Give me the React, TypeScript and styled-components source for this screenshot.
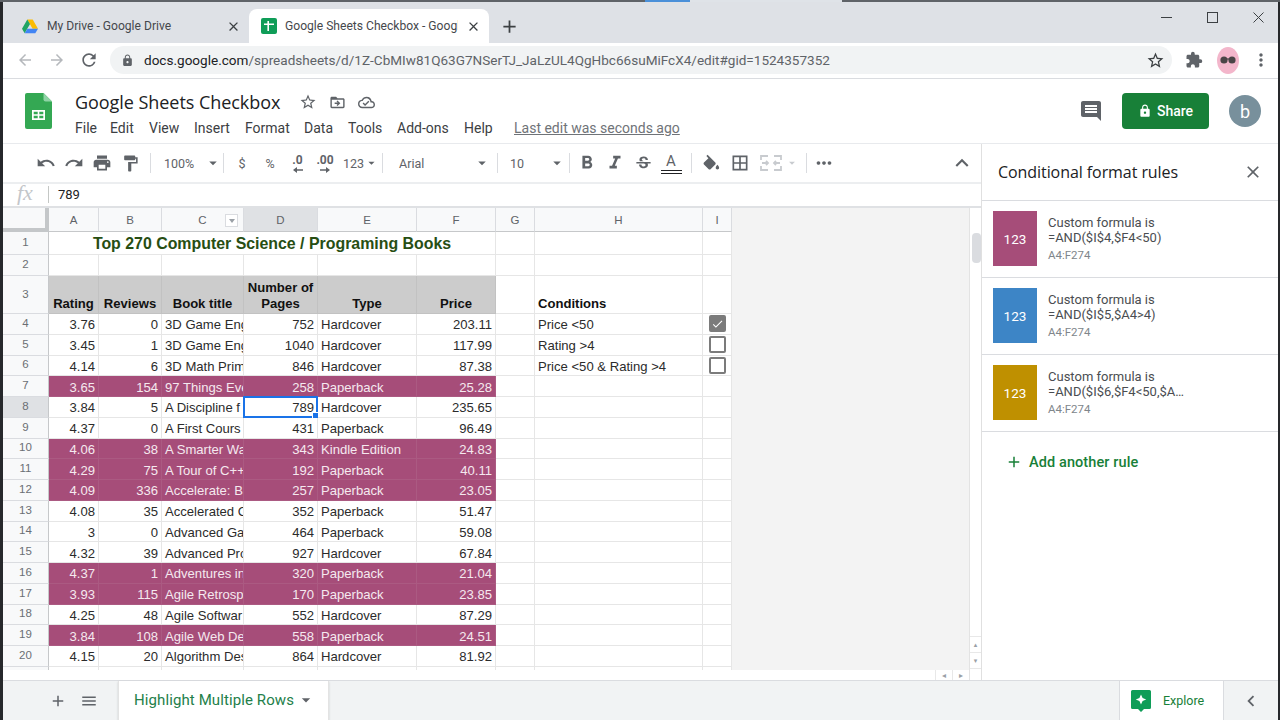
import React from "react";
import styled, { createGlobalStyle } from "styled-components";
import {
  MdUndo, MdRedo, MdPrint, MdFormatPaint, MdFormatBold, MdFormatItalic, MdStrikethroughS,
  MdBorderAll, MdMoreHoriz, MdExpandLess, MdArrowDropDown, MdClose,
  MdArrowBack, MdArrowForward, MdRefresh, MdLock, MdStarBorder, MdExtension, MdMoreVert,
  MdAdd, MdMenu, MdChevronLeft, MdDriveFileMoveOutline, MdOutlineCloudDone, MdInsertComment, MdCheck,
} from "react-icons/md";

const Global = createGlobalStyle`
  html, body { margin: 0; padding: 0; width: 1280px; height: 720px; overflow: hidden; background: #2b2d30; }
  #root { width: 1280px; height: 720px; }
  * { box-sizing: border-box; }
`;

const Frame = styled.div`
  width: 1280px; height: 720px; display: flex; flex-direction: column; overflow: hidden;
  padding-left: 3px; padding-right: 2px; background: #26282b;
  font-family: Roboto, "Liberation Sans", sans-serif; color: #202124; position: relative;
`;
const TopLine = styled.div`
  height: 2px; flex: none; margin-left: -3px; margin-right: -2px; display: flex; background: #5f6368;
`;
const TopSeg = styled.div<{ $w: number; $c: string }>`
  width: ${(p) => p.$w}px; background: ${(p) => p.$c};
`;
const TabStrip = styled.div`
  height: 41px; flex: none; background: #dee1e6; display: flex; align-items: flex-end; padding-left: 6px; position: relative;
`;
const Tab = styled.div<{ $active?: boolean }>`
  width: 240px; height: 34px; display: flex; align-items: center; padding: 0 8px 0 ${(p) => (p.$active ? 12 : 13)}px; gap: ${(p) => (p.$active ? 8 : 9)}px;
  color: #45484c; border-radius: 8px 8px 0 0;
  background: ${(p) => (p.$active ? "#ffffff" : "transparent")};
`;
const TabTitle = styled.span`
  flex: 1; white-space: nowrap; overflow: hidden; font-size: 12.1px;
`;
const TabPlus = styled.div`
  width: 24px; height: 34px; display: flex; align-items: center; justify-content: center; margin-left: 8px; color: #3c4043;
`;
const WinControls = styled.div`
  margin-left: auto; margin-right: -3px; align-self: flex-start; display: flex; height: 30px; align-items: center; color: #3c4043;
`;
const WinBtn = styled.div`
  width: 46px; height: 30px; display: flex; align-items: center; justify-content: center;
`;
const AddressRow = styled.div`
  height: 36px; flex: none; background: #fff; border-bottom: 1px solid #dadce0; display: flex; align-items: center; padding-left: 6px; color: #5f6368; padding-bottom: 1px;
`;
const NavBtn = styled.div<{ $w?: number; $muted?: boolean }>`
  width: ${(p) => p.$w ?? 32}px; flex: none; display: flex; align-items: center; justify-content: center;
  color: ${(p) => (p.$muted ? "#b5b8bc" : "#5f6368")};
`;
const Omnibox = styled.div`
  width: 1062px; height: 28px; margin-left: 5px; border-radius: 14px; background: #f1f3f4; display: flex; align-items: center; padding: 0 7px 0 11px; flex: none;
`;
const Url = styled.div`
  flex: 1; font-size: 13.55px; color: #5f6368; margin-left: 10px; white-space: nowrap;
`;
const UrlHost = styled.span`
  color: #202124;
`;
const Avatar = styled.div`
  width: 22px; height: 27px; border-radius: 50%; background: #f3b6cb; display: flex; align-items: center; justify-content: center; margin: 0 11px 0 1px; flex: none;
`;
const AppHeader = styled.div`
  height: 65px; flex: none; background: #fff; display: flex; border-bottom: 1px solid #e8eaed;
`;
const LogoWrap = styled.div`
  width: 72px; flex: none; padding: 14px 0 0 22px;
`;
const TitleCol = styled.div`
  flex: 1; display: flex; flex-direction: column; padding-top: 11px;
`;
const TitleRow = styled.div`
  display: flex; align-items: center; height: 24px; color: #5f6368;
`;
const DocTitle = styled.div`
  font-size: 18px; color: #202124; margin-right: 12px; width: 206px; white-space: nowrap; font-family: "Open Sans", Roboto, sans-serif; letter-spacing: -0.05px;
`;
const TitleIcon = styled.div`
  width: 29.5px; display: flex; justify-content: center; flex: none;
`;
const MenuRow = styled.div`
  display: flex; align-items: center; height: 24px; margin-top: 2px; font-size: 14px; color: #3c4043;
`;
const MenuItem = styled.span<{ $w: number }>`
  width: ${(p) => p.$w}px; flex: none; white-space: nowrap;
`;
const LastEdit = styled.span`
  color: #6f7378; text-decoration: underline; white-space: nowrap; font-size: 14px;
`;
const HeaderRight = styled.div`
  display: flex; align-items: center; height: 100%; margin-bottom: 13px; padding-right: 17px;
`;
const CommentBtn = styled.div`
  color: #5f6368; margin-right: 19px; display: flex;
`;
const ShareBtn = styled.div`
  width: 87px; height: 36px; background: #188038; color: #fff; border-radius: 4px; display: flex; align-items: center; justify-content: center; gap: 5px; font-size: 14px; font-weight: 500; margin-right: 20px;
`;
const UserBadge = styled.div`
  width: 32px; height: 32px; border-radius: 50%; background: #78909c; color: #fff; display: flex; align-items: center; justify-content: center; font-size: 18px;
`;
const Body = styled.div`
  height: 536px; flex: none; display: flex; background: #fff;
`;
const WorkArea = styled.div`
  width: 978px; flex: none; display: flex; flex-direction: column;
`;
const Toolbar = styled.div`
  height: 40px; flex: none; display: flex; align-items: center; padding-left: 29px; border-bottom: 2px solid #eceef0; color: #5f6368; background: #fff;
`;
const Tool = styled.div<{ $w?: number; $ml?: number; $muted?: boolean; $left?: boolean; $pl?: number; $pr?: number }>`
  width: ${(p) => p.$w ?? 28}px; margin-left: ${(p) => p.$ml ?? 0}px; flex: none; height: 26px; display: flex; align-items: center; font-size: 12.5px;
  padding-left: ${(p) => p.$pl ?? 0}px; padding-right: ${(p) => p.$pr ?? 0}px;
  justify-content: ${(p) => (p.$left ? "space-between" : "center")};
  color: ${(p) => (p.$muted ? "#c8cbcf" : "#5f6368")};
`;
const ToolSep = styled.div<{ $ml: number }>`
  width: 1px; height: 20px; background: #dadce0; flex: none; margin-left: ${(p) => p.$ml}px;
`;
const DecimalTool = styled.div`
  display: flex; flex-direction: column; align-items: center; gap: 1px; font-size: 12px; font-weight: 700; line-height: 12px; color: #5f6368;
`;
const ColorA = styled.div`
  display: flex; flex-direction: column; align-items: center; font-size: 15px; line-height: 16px; color: #5f6368; width: 22px;
`;
const ColorBar = styled.div`
  width: 21px; height: 4px; border-top: 1.5px solid #202124; border-bottom: 1.5px solid #202124; margin-top: 1px;
`;
const Formula = styled.div`
  height: 24px; flex: none; display: flex; align-items: center; background: #fff; border-bottom: 2px solid #dfe1e4; font-size: 13px; color: #202124; padding-bottom: 2px;
`;
const Fx = styled.div`
  width: 45px; flex: none; font-family: "Liberation Serif", serif; font-style: italic; font-size: 22px; color: #c3c6ca; padding-left: 14px; line-height: 20px; margin-top: -2px;
`;
const FxSep = styled.div`
  width: 1px; height: 17px; background: #c4c7c5; margin-right: 9px;
`;
const GridArea = styled.div`
  flex: 1; display: flex; background: #f3f3f3; min-height: 0;
`;
const SheetCol = styled.div`
  flex: 1; display: flex; flex-direction: column; min-width: 0;
`;
const SheetScroll = styled.div`
  height: 462px; flex: none; overflow: hidden;
`;
const Row = styled.div<{ $h: number }>`
  display: grid; width: 729px; height: ${(p) => p.$h}px;
  grid-template-columns: 46px 50px 63px 82px 74px 99px 79px 39px 168px 29px;
`;
const ColHeader = styled.div<{ $sel?: boolean; $corner?: boolean }>`
  background: ${(p) => (p.$sel ? "#dfe1e4" : "#f8f9fa")}; border-right: ${(p) => (p.$corner ? "4px solid #c4c7c9" : "1px solid #dadce0")};
  border-bottom: ${(p) => (p.$corner ? "4px solid #c4c7c9" : "1.5px solid #c6c8ca")};
  font-size: 11.5px; color: #5f6368; display: flex; align-items: center; justify-content: center; position: relative; font-family: "Liberation Sans", sans-serif;
`;
const FilterChip = styled.div`
  position: absolute; right: 5px; top: 6px; width: 13px; height: 13px; background: #fff; border: 1px solid #dadce0; display: flex; align-items: center; justify-content: center;
  &::after { content: ""; border: 3.5px solid transparent; border-top: 4px solid #9aa0a6; margin-top: 4px; }
`;
const RowNum = styled.div<{ $sel?: boolean }>`
  background: ${(p) => (p.$sel ? "#dfe1e4" : "#f8f9fa")}; border-right: 1.5px solid #c6c8ca; border-bottom: 1px solid #dadce0;
  font-size: 11.5px; color: #6b6f74; display: flex; align-items: center; justify-content: center; font-family: "Liberation Sans", sans-serif; padding-bottom: 2px;
`;
const Cell = styled.div<{ $hi?: boolean; $gray?: boolean; $bold?: boolean; $right?: boolean; $center?: boolean; $sel?: boolean; $wrap?: boolean }>`
  font-family: "Liberation Sans", Arial, sans-serif; font-size: 13.1px; padding: 0 3px; line-height: 15.5px;
  white-space: ${(p) => (p.$wrap ? "normal" : "nowrap")}; overflow: ${(p) => (p.$sel ? "visible" : "hidden")}; position: relative;
  display: flex; align-items: flex-end; padding-bottom: ${(p) => (p.$bold ? 2 : 1)}px;
  justify-content: ${(p) => (p.$center ? "center" : p.$right ? "flex-end" : "flex-start")};
  text-align: ${(p) => (p.$center ? "center" : "left")};
  font-weight: ${(p) => (p.$bold ? 700 : 400)};
  background: ${(p) => (p.$hi ? "#a64d79" : p.$gray ? "#cccccc" : "#ffffff")};
  color: ${(p) => (p.$hi ? "#f5e9ef" : p.$bold ? "#111" : "#2b2b2b")};
  border-right: 1px solid ${(p) => (p.$hi ? "#ab5a82" : p.$gray ? "#c2c2c2" : "#e6e6e6")};
  border-bottom: 1px solid ${(p) => (p.$hi ? "#ab5a82" : p.$gray ? "#c2c2c2" : "#e6e6e6")};
`;
const TitleCell = styled.div`
  grid-column: 2 / span 6; font-family: "Liberation Sans", Arial, sans-serif; font-size: 15.9px; font-weight: 700; color: #274e13;
  background: #fff; border-right: 1px solid #e6e6e6; border-bottom: 1px solid #e6e6e6; display: flex; align-items: center; justify-content: center; padding-top: 1px;
`;
const Selection = styled.div`
  position: absolute; left: -1px; top: -1px; right: -1px; bottom: -1px; border: 2px solid #1a73e8; pointer-events: none;
  &::after { content: ""; position: absolute; right: -4px; bottom: -4px; width: 6px; height: 6px; background: #1a73e8; border: 1px solid #fff; box-sizing: content-box; }
`;
const CheckCell = styled(Cell)`
  align-items: center; justify-content: center; padding: 0;
`;
const Check = styled.div<{ $on?: boolean }>`
  width: 17px; height: 17px; border-radius: 2px; border: 2px solid #7b7b7b; background: ${(p) => (p.$on ? "#7b7b7b" : "#fff")}; color: #fff; display: flex; align-items: center; justify-content: center;
`;
const HScroll = styled.div`
  flex: 1; background: #fff; display: flex; justify-content: flex-end; align-items: center; color: #9aa0a6;
`;
const ScrollArrow = styled.div`
  width: 17px; height: 100%; display: flex; align-items: center; justify-content: center; font-size: 8px; border-left: 1px solid #e8e8e8; font-family: "DejaVu Sans", sans-serif;
`;
const VScroll = styled.div`
  width: 12px; flex: none; background: #fff; display: flex; flex-direction: column; border-left: 1px solid #e3e3e3; color: #9aa0a6;
`;
const VTop = styled.div`
  height: 24px; flex: none; background: #fff;
`;
const VThumb = styled.div`
  width: 9px; height: 30px; background: #dadce0; border-radius: 4px; margin-left: 2px; margin-top: 1px; flex: none;
`;
const VArrow = styled.div<{ $auto?: boolean }>`
  height: 16px; flex: none; font-size: 7px; display: flex; align-items: center; justify-content: center; font-family: "DejaVu Sans", sans-serif; border-top: 1px solid #e8e8e8;
  margin-top: ${(p) => (p.$auto ? "auto" : "0")};
`;
const VEnd = styled.div`
  height: 12px; flex: none; border-top: 1px solid #e8e8e8;
`;
const Panel = styled.div`
  flex: 1; border-left: 1px solid #e0e0e0; background: #fff; display: flex; flex-direction: column;
`;
const PanelHead = styled.div`
  height: 57px; flex: none; display: flex; align-items: center; justify-content: space-between; padding: 0 15px 1px 16px; border-bottom: 1px solid #dadce0; color: #5f6368;
`;
const PanelTitle = styled.div`
  font-size: 16px; color: #202124; font-family: "Open Sans", Roboto, sans-serif; letter-spacing: -0.07px;
`;
const Rule = styled.div`
  height: 77px; flex: none; display: flex; align-items: center; padding: 0 0 1px 11px; border-bottom: 1px solid #dadce0;
`;
const Swatch = styled.div<{ $c: string }>`
  width: 44px; height: 55px; flex: none; background: ${(p) => p.$c}; color: #fff; display: flex; align-items: center; justify-content: center; font-size: 13.5px;
`;
const RuleText = styled.div`
  margin-left: 11px; display: flex; flex-direction: column; font-size: 13px; line-height: 15px; color: #4a4d51;
`;
const RuleRange = styled.div`
  color: #80868b; font-size: 11.5px; line-height: 15px; margin-top: 3px;
`;
const AddRule = styled.div`
  display: flex; align-items: center; gap: 6px; padding: 21px 0 0 23px; color: #188038; font-size: 14.5px; font-weight: 500; letter-spacing: 0.1px;
`;
const BottomBar = styled.div`
  flex: 1; background: #f1f3f4; border-top: 1px solid #dadce0; display: flex; align-items: stretch; color: #5f6368;
`;
const BottomBtn = styled.div<{ $w: number; $ml?: number }>`
  width: ${(p) => p.$w}px; margin-left: ${(p) => p.$ml ?? 0}px; flex: none; display: flex; align-items: center; justify-content: center;
`;
const SheetTab = styled.div`
  width: 211px; margin-left: 14px; background: #fff; border-left: 1px solid #e3e3e3; border-right: 1px solid #e3e3e3; display: flex; align-items: center; padding: 0 0 2px 15px; gap: 2px; color: #23804a; font-size: 15px; font-weight: 400; letter-spacing: 0.1px; white-space: nowrap; box-shadow: 0 1px 2px rgba(60,64,67,.2);
`;
const Explore = styled.div`
  width: 105px; margin-left: auto; background: #fff; border-left: 1px solid #dadce0; border-right: 1px solid #dadce0; display: flex; align-items: center; padding-left: 11px; gap: 12px; color: #188038; font-size: 12.5px;
`;
const Collapse = styled.div`
  width: 54px; flex: none; display: flex; align-items: center; justify-content: center;
`;

const cols = ["A", "B", "C", "D", "E", "F", "G", "H", "I"];
type D = [string, string, string, string, string, string, boolean];
const data: D[] = [
  ["3.76", "0", "3D Game Eng", "752", "Hardcover", "203.11", false],
  ["3.45", "1", "3D Game Eng", "1040", "Hardcover", "117.99", false],
  ["4.14", "6", "3D Math Prim", "846", "Hardcover", "87.38", false],
  ["3.65", "154", "97 Things Eve", "258", "Paperback", "25.28", true],
  ["3.84", "5", "A Discipline f", "789", "Hardcover", "235.65", false],
  ["4.37", "0", "A First Cours", "431", "Paperback", "96.49", false],
  ["4.06", "38", "A Smarter Wa", "343", "Kindle Edition", "24.83", true],
  ["4.29", "75", "A Tour of C++", "192", "Paperback", "40.11", true],
  ["4.09", "336", "Accelerate: B", "257", "Paperback", "23.05", true],
  ["4.08", "35", "Accelerated C", "352", "Paperback", "51.47", false],
  ["3", "0", "Advanced Ga", "464", "Paperback", "59.08", false],
  ["4.32", "39", "Advanced Pro", "927", "Hardcover", "67.84", false],
  ["4.37", "1", "Adventures in", "320", "Paperback", "21.04", true],
  ["3.93", "115", "Agile Retrosp", "170", "Paperback", "23.85", true],
  ["4.25", "48", "Agile Softwar", "552", "Hardcover", "87.29", false],
  ["3.84", "108", "Agile Web De", "558", "Paperback", "24.51", true],
  ["4.15", "20", "Algorithm Des", "864", "Hardcover", "81.92", false],
];
const conds: Record<number, string> = { 0: "Price <50", 1: "Rating >4", 2: "Price <50 & Rating >4" };
const RH = 20.76;

const DriveLogo = () => (
  <svg width="16" height="15" viewBox="0 0 16 14">
    <path d="M5.3 0h5.4l5.3 9.2h-5.4z" fill="#fbbc04" />
    <path d="M5.3 0 0 9.2l2.7 4.6L8 4.6z" fill="#1fa463" />
    <path d="M2.7 13.8h10.6L16 9.2H5.4z" fill="#4285f4" />
  </svg>
);
const SheetFavicon = () => (
  <svg width="16" height="16" viewBox="0 0 16 16">
    <rect width="16" height="16" rx="2" fill="#0f9d58" />
    <path d="M3 6.3h10M7.2 3v10" stroke="#fff" strokeWidth="1.6" />
  </svg>
);
const SheetsLogo = () => (
  <svg width="27" height="36" viewBox="0 0 27 36">
    <path d="M2 0h16.5L27 8.5V34a2 2 0 0 1-2 2H2a2 2 0 0 1-2-2V2a2 2 0 0 1 2-2z" fill="#34a853" />
    <path d="M18.5 0 27 8.5h-6.5a2 2 0 0 1-2-2z" fill="#8fd3a5" />
    <path d="M7 17h13v10H7zM8.7 18.7v2.5h4v-2.5zm5.6 0v2.5h4v-2.5zm-5.6 4.1v2.5h4v-2.5zm5.6 0v2.5h4v-2.5z" fill="#fff" fillRule="evenodd" />
  </svg>
);
const ExploreLogo = () => (
  <svg width="20" height="22" viewBox="0 0 20 22">
    <path d="M1.5 0h17A1.5 1.5 0 0 1 20 1.5v16a1.5 1.5 0 0 1-1.5 1.5H13l-3 3-3-3H1.500A1.500 1.500 0 0 1 0 17.500v-16A1.500 1.500 0 0 1 1.500 0z" fill="#0f9d58" />
    <path d="M10 4.5 11.6 8l3.6 1.5-3.6 1.6L10 14.5l-1.6-3.4L4.8 9.5 8.4 8z" fill="#fff" />
  </svg>
);
const Glasses = () => (
  <svg width="18" height="10" viewBox="0 0 18 10">
    <circle cx="5" cy="5" r="3.6" fill="#4a4446" />
    <circle cx="13" cy="5" r="3.6" fill="#4a4446" />
    <path d="M8 4h2" stroke="#3c3c3c" />
  </svg>
);
const FillBucket = () => (
  <svg width="19" height="19" viewBox="0 0 22 20" fill="#5f6368">
    <path d="M16.56 8.94 7.62 0 6.21 1.41l2.38 2.38-5.15 5.15c-.59.59-.59 1.54 0 2.12l5.5 5.5c.29.29.68.44 1.06.44s.77-.15 1.06-.44l5.5-5.5c.59-.58.59-1.53 0-2.12z" />
    <path d="M19 11.5s-2 2.17-2 3.5c0 1.1.9 2 2 2s2-.9 2-2c0-1.33-2-3.5-2-3.5z" />
  </svg>
);
const DecArrow = ({ right }: { right?: boolean }) => (
  <svg width="10" height="6" viewBox="0 0 10 6" fill="#5f6368">
    {right ? <path d="M0 2.2h6V0l4 3-4 3V3.800H0z" /> : <path d="M10 2.2H4V0L0 3l4 3V3.800h6z" />}
  </svg>
);
const Maximize = () => (
  <svg width="11" height="11" viewBox="0 0 11 11"><rect x=".5" y=".5" width="10" height="10" fill="none" stroke="#3c4043" /></svg>
);
const Minimize = () => (
  <svg width="11" height="11" viewBox="0 0 11 11"><path d="M0 5.5h11" stroke="#3c4043" /></svg>
);
const WinClose = () => (
  <svg width="11" height="11" viewBox="0 0 11 11"><path d="M.5.5l10 10M10.5.5l-10 10" stroke="#3c4043" /></svg>
);
const Merge = () => (
  <svg width="22" height="16" viewBox="0 0 22 16" fill="none" stroke="#c8cbcf" strokeWidth="1.8">
    <path d="M1 5V1h7M14 1h7v4M1 11v4h7M14 15h7v-4M2 8h6M20 8h-6M6 6l2 2-2 2M16 6l-2 2 2 2" />
  </svg>
);

export default function App() {
  return (
    <Frame>
      <Global />
      <TopLine>
        <TopSeg $w={645} $c="#5f6368" />
        <TopSeg $w={45} $c="#4a90d9" />
        <TopSeg $w={152} $c="#dfe3e8" />
      </TopLine>
      <TabStrip>
        <Tab>
          <DriveLogo />
          <TabTitle>My Drive - Google Drive</TabTitle>
          <MdClose size={15} color="#3c4043" />
        </Tab>
        <Tab $active>
          <SheetFavicon />
          <TabTitle>Google Sheets Checkbox - Googl</TabTitle>
          <MdClose size={15} color="#3c4043" />
        </Tab>
        <TabPlus><MdAdd size={21} /></TabPlus>
        <WinControls>
          <WinBtn><Minimize /></WinBtn>
          <WinBtn><Maximize /></WinBtn>
          <WinBtn><WinClose /></WinBtn>
        </WinControls>
      </TabStrip>
      <AddressRow>
        <NavBtn $muted><MdArrowBack size={18} /></NavBtn>
        <NavBtn $muted><MdArrowForward size={18} /></NavBtn>
        <NavBtn><MdRefresh size={20} /></NavBtn>
        <Omnibox>
          <MdLock size={13} color="#5f6368" />
          <Url><UrlHost>docs.google.com</UrlHost>/spreadsheets/d/1Z-CbMIw81Q63G7NSerTJ_JaLzUL4QgHbc66suMiFcX4/edit#gid=1524357352</Url>
          <MdStarBorder size={19} color="#3c4043" />
        </Omnibox>
        <NavBtn $w={44}><MdExtension size={18} /></NavBtn>
        <Avatar><Glasses /></Avatar>
        <NavBtn $w={22}><MdMoreVert size={20} /></NavBtn>
      </AddressRow>
      <AppHeader>
        <LogoWrap><SheetsLogo /></LogoWrap>
        <TitleCol>
          <TitleRow>
            <DocTitle>Google Sheets Checkbox</DocTitle>
            <TitleIcon><MdStarBorder size={18} /></TitleIcon>
            <TitleIcon><MdDriveFileMoveOutline size={17} /></TitleIcon>
            <TitleIcon><MdOutlineCloudDone size={17} /></TitleIcon>
          </TitleRow>
          <MenuRow>
            <MenuItem $w={35}>File</MenuItem>
            <MenuItem $w={39}>Edit</MenuItem>
            <MenuItem $w={45}>View</MenuItem>
            <MenuItem $w={51}>Insert</MenuItem>
            <MenuItem $w={59}>Format</MenuItem>
            <MenuItem $w={44}>Data</MenuItem>
            <MenuItem $w={49}>Tools</MenuItem>
            <MenuItem $w={67}>Add-ons</MenuItem>
            <MenuItem $w={50}>Help</MenuItem>
            <LastEdit>Last edit was seconds ago</LastEdit>
          </MenuRow>
        </TitleCol>
        <HeaderRight>
          <CommentBtn><MdInsertComment size={24} /></CommentBtn>
          <ShareBtn><MdLock size={14} />Share</ShareBtn>
          <UserBadge>b</UserBadge>
        </HeaderRight>
      </AppHeader>
      <Body>
        <WorkArea>
          <Toolbar>
            <Tool><MdUndo size={20} /></Tool>
            <Tool><MdRedo size={20} /></Tool>
            <Tool><MdPrint size={20} /></Tool>
            <Tool><MdFormatPaint size={19} /></Tool>
            <ToolSep $ml={6} />
            <Tool $w={66} $ml={5} $left $pl={8}>100%<MdArrowDropDown size={18} /></Tool>
            <ToolSep $ml={1} />
            <Tool $ml={4}>$</Tool>
            <Tool>%</Tool>
            <Tool $w={27}><DecimalTool>.0<DecArrow /></DecimalTool></Tool>
            <Tool><DecimalTool>.00<DecArrow right /></DecimalTool></Tool>
            <Tool $w={40} $left $pl={4}>123<MdArrowDropDown size={16} /></Tool>
            <ToolSep $ml={3} />
            <Tool $w={114} $left $pl={16} $pr={6}>Arial<MdArrowDropDown size={18} /></Tool>
            <ToolSep $ml={0} />
            <Tool $w={70} $left $pl={12} $pr={2}>10<MdArrowDropDown size={18} /></Tool>
            <ToolSep $ml={1} />
            <Tool $ml={3}><MdFormatBold size={22} /></Tool>
            <Tool><MdFormatItalic size={22} /></Tool>
            <Tool><MdStrikethroughS size={19} /></Tool>
            <Tool><ColorA>A<ColorBar /></ColorA></Tool>
            <ToolSep $ml={6} />
            <Tool $ml={4}><FillBucket /></Tool>
            <Tool $ml={2}><MdBorderAll size={20} /></Tool>
            <Tool $ml={3}><Merge /></Tool>
            <Tool $w={14} $muted><MdArrowDropDown size={16} /></Tool>
            <ToolSep $ml={7} />
            <Tool $ml={3}><MdMoreHoriz size={22} /></Tool>
            <Tool $ml={110}><MdExpandLess size={26} /></Tool>
          </Toolbar>
          <Formula>
            <Fx>fx</Fx>
            <FxSep />
            789
          </Formula>
          <GridArea>
            <SheetCol>
              <SheetScroll>
                <Row $h={24}>
                  <ColHeader $corner />
                  {cols.map((c) => (
                    <ColHeader key={c} $sel={c === "D"}>
                      {c}
                      {c === "C" && <FilterChip />}
                    </ColHeader>
                  ))}
                </Row>
                <Row $h={23}>
                  <RowNum>1</RowNum>
                  <TitleCell>Top 270 Computer Science / Programing Books</TitleCell>
                  <Cell /><Cell /><Cell />
                </Row>
                <Row $h={21}>
                  <RowNum>2</RowNum>
                  {cols.map((c) => <Cell key={c} />)}
                </Row>
                <Row $h={38}>
                  <RowNum>3</RowNum>
                  <Cell $gray $bold $center>Rating</Cell>
                  <Cell $gray $bold $center>Reviews</Cell>
                  <Cell $gray $bold $center>Book title</Cell>
                  <Cell $gray $bold $center $wrap>Number of Pages</Cell>
                  <Cell $gray $bold $center>Type</Cell>
                  <Cell $gray $bold $center>Price</Cell>
                  <Cell />
                  <Cell $bold>Conditions</Cell>
                  <Cell />
                </Row>
                {data.map((d, i) => (
                  <Row key={i} $h={RH}>
                    <RowNum $sel={i === 4}>{i + 4}</RowNum>
                    <Cell $hi={d[6]} $right>{d[0]}</Cell>
                    <Cell $hi={d[6]} $right>{d[1]}</Cell>
                    <Cell $hi={d[6]}>{d[2]}</Cell>
                    <Cell $hi={d[6]} $right $sel={i === 4}>{d[3]}{i === 4 && <Selection />}</Cell>
                    <Cell $hi={d[6]}>{d[4]}</Cell>
                    <Cell $hi={d[6]} $right>{d[5]}</Cell>
                    <Cell />
                    <Cell>{conds[i] ?? ""}</Cell>
                    {i < 3 ? (
                      <CheckCell>
                        <Check $on={i === 0}>{i === 0 && <MdCheck size={14} />}</Check>
                      </CheckCell>
                    ) : (
                      <Cell />
                    )}
                  </Row>
                ))}
                <Row $h={RH}>
                  <RowNum />
                  {cols.map((c) => <Cell key={c} />)}
                </Row>
              </SheetScroll>
              <HScroll>
                <ScrollArrow>◂</ScrollArrow>
                <ScrollArrow>▸</ScrollArrow>
              </HScroll>
            </SheetCol>
            <VScroll>
              <VTop />
              <VThumb />
              <VArrow $auto>▴</VArrow>
              <VArrow>▾</VArrow>
              <VEnd />
            </VScroll>
          </GridArea>
        </WorkArea>
        <Panel>
          <PanelHead>
            <PanelTitle>Conditional format rules</PanelTitle>
            <MdClose size={20} />
          </PanelHead>
          <Rule>
            <Swatch $c="#a64d79">123</Swatch>
            <RuleText>Custom formula is<span>=AND($I$4,$F4&lt;50)</span><RuleRange>A4:F274</RuleRange></RuleText>
          </Rule>
          <Rule>
            <Swatch $c="#3d85c6">123</Swatch>
            <RuleText>Custom formula is<span>=AND($I$5,$A4&gt;4)</span><RuleRange>A4:F274</RuleRange></RuleText>
          </Rule>
          <Rule>
            <Swatch $c="#bf9000">123</Swatch>
            <RuleText>Custom formula is<span>=AND($I$6,$F4&lt;50,$A…</span><RuleRange>A4:F274</RuleRange></RuleText>
          </Rule>
          <AddRule><MdAdd size={18} />Add another rule</AddRule>
        </Panel>
      </Body>
      <BottomBar>
        <BottomBtn $w={30} $ml={40}><MdAdd size={18} /></BottomBtn>
        <BottomBtn $w={31}><MdMenu size={18} /></BottomBtn>
        <SheetTab>Highlight Multiple Rows<MdArrowDropDown size={20} color="#5f6368" /></SheetTab>
        <Explore><ExploreLogo />Explore</Explore>
        <Collapse><MdChevronLeft size={22} /></Collapse>
      </BottomBar>
    </Frame>
  );
}
